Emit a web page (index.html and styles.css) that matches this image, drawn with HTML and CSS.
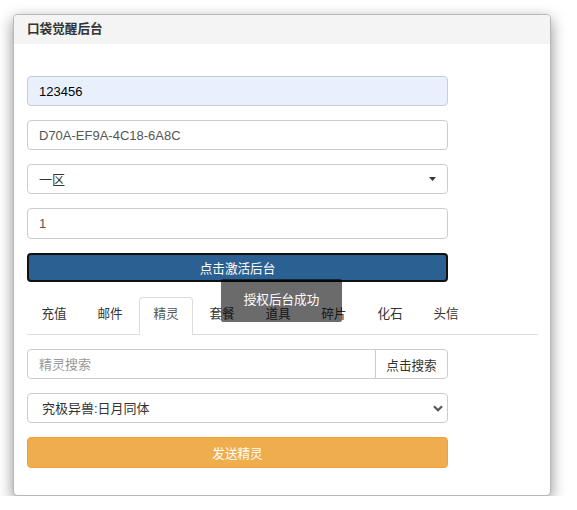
FILE: index.html
```html
<!DOCTYPE html>
<html lang="zh-CN">
<head>
<meta charset="utf-8">
<title>口袋觉醒后台</title>
<link rel="stylesheet" href="styles.css">
</head>
<body>
<div class="card">
  <div class="card-header">口袋觉醒后台</div>
  <div class="card-body">
    <form class="form">
      <input class="ctl autofill" type="text" value="123456">
      <input class="ctl" type="text" value="D70A-EF9A-4C18-6A8C">
      <div class="sel-wrap">
        <select class="ctl sel"><option>一区</option></select>
        <svg class="caret" width="7" height="4" viewBox="0 0 7 4"><path d="M0 0H7L3.5 4Z" fill="#333"/></svg>
      </div>
      <input class="ctl num" type="text" value="1">
      <button class="btn btn-primary" type="button">点击激活后台</button>
    </form>
    <ul class="tabs">
      <li class="tab">充值</li>
      <li class="tab">邮件</li>
      <li class="tab active">精灵</li>
      <li class="tab">套餐</li>
      <li class="tab">道具</li>
      <li class="tab">碎片</li>
      <li class="tab">化石</li>
      <li class="tab">头信</li>
    </ul>
    <div class="pane">
      <div class="input-group">
        <input class="ctl grp-input" type="text" placeholder="精灵搜索">
        <button class="grp-btn" type="button">点击搜索</button>
      </div>
      <div class="sel-wrap">
        <select class="ctl sel sel2"><option>究极异兽:日月同体</option></select>
        <svg class="chevron" width="10" height="7" viewBox="0 0 10 7"><path d="M1 1.2L5 5.2L9 1.2" fill="none" stroke="#555" stroke-width="2.2"/></svg>
      </div>
      <button class="btn btn-warning" type="button">发送精灵</button>
    </div>
  </div>
</div>
<div class="toast">授权后台成功</div>
</body>
</html>
```
FILE: styles.css
```css
* { box-sizing: border-box; }
html, body { margin: 0; padding: 0; background: #fff; }
body {
  font-family: "Liberation Sans", "Noto Sans CJK SC", sans-serif;
  font-size: 13px;
  color: #333;
  padding: 14px 0 0 13px;
}
.card {
  width: 538px;
  background: #fff;
  border: 1px solid rgba(0,0,0,.28);
  border-radius: 5px;
  box-shadow: 0 5px 15px rgba(0,0,0,.45);
  overflow: hidden;
}
.card-header {
  height: 29px;
  line-height: 29px;
  padding-left: 13px;
  background: #f4f4f4;
  font-weight: bold;
  font-size: 12.6px;
  color: #333;
}
.card-body {
  padding: 32px 12px 27px 13px;
}
.form, .pane {
  display: flex;
  flex-direction: column;
  gap: 14px;
  width: 421px;
}
.ctl {
  display: block;
  width: 100%;
  height: 30px;
  padding: 0 11px;
  border: 1px solid #ccc;
  border-radius: 4px;
  background: #fff;
  font-family: inherit;
  font-size: 13px;
  color: #555;
  outline: none;
  margin: 0;
}
.autofill { background: #e8f0fe; color: #000; border-color: #c9ccd2; }
.num { height: 31px; }
.sel-wrap { position: relative; }
.sel {
  appearance: none;
  -webkit-appearance: none;
  color: #333;
}
.sel2 { padding-left: 14px; }
.caret { position: absolute; right: 12px; top: 13px; }
.chevron { position: absolute; right: 5px; top: 12px; }
.btn {
  display: block;
  width: 100%;
  height: 30px;
  border-radius: 4px;
  font-family: inherit;
  font-size: 12.6px;
  color: #fff;
  text-align: center;
  padding: 0;
  margin: 0;
}
.btn-primary {
  background: #2a6192;
  border: 2px solid #111;
  height: 29px;
  margin-top: 0;
}
.btn-warning {
  background: #f0ad4e;
  border: 1px solid #eea236;
  height: 31px;
}
.tabs {
  list-style: none;
  margin: 15px 0 14px;
  padding: 0;
  display: flex;
  border-bottom: 1px solid #ddd;
}
.tab {
  width: 54px;
  margin: 0 2px -1px 0;
  padding: 7px 0 11px;
  text-align: center;
  line-height: 18px;
  border: 1px solid transparent;
  border-radius: 4px 4px 0 0;
  font-size: 12.6px;
  color: #333;
}
.tab.active {
  border-color: #ddd #ddd transparent;
  background: #fff;
  color: #555;
}
.input-group { display: flex; }
.grp-input {
  flex: 1;
  border-radius: 4px 0 0 4px;
}
.grp-input::placeholder { color: #999; }
.grp-btn {
  width: 73px;
  height: 30px;
  margin-left: -1px;
  border: 1px solid #ccc;
  border-radius: 0 4px 4px 0;
  background: #fff;
  font-family: inherit;
  font-size: 12.6px;
  color: #333;
  padding: 0;
}
.toast {
  position: absolute;
  left: 221px;
  top: 279px;
  width: 121px;
  height: 43px;
  line-height: 43px;
  text-align: center;
  background: rgba(0,0,0,.58);
  color: #fff;
  font-size: 12.6px;
  border-radius: 2px;
}
```
